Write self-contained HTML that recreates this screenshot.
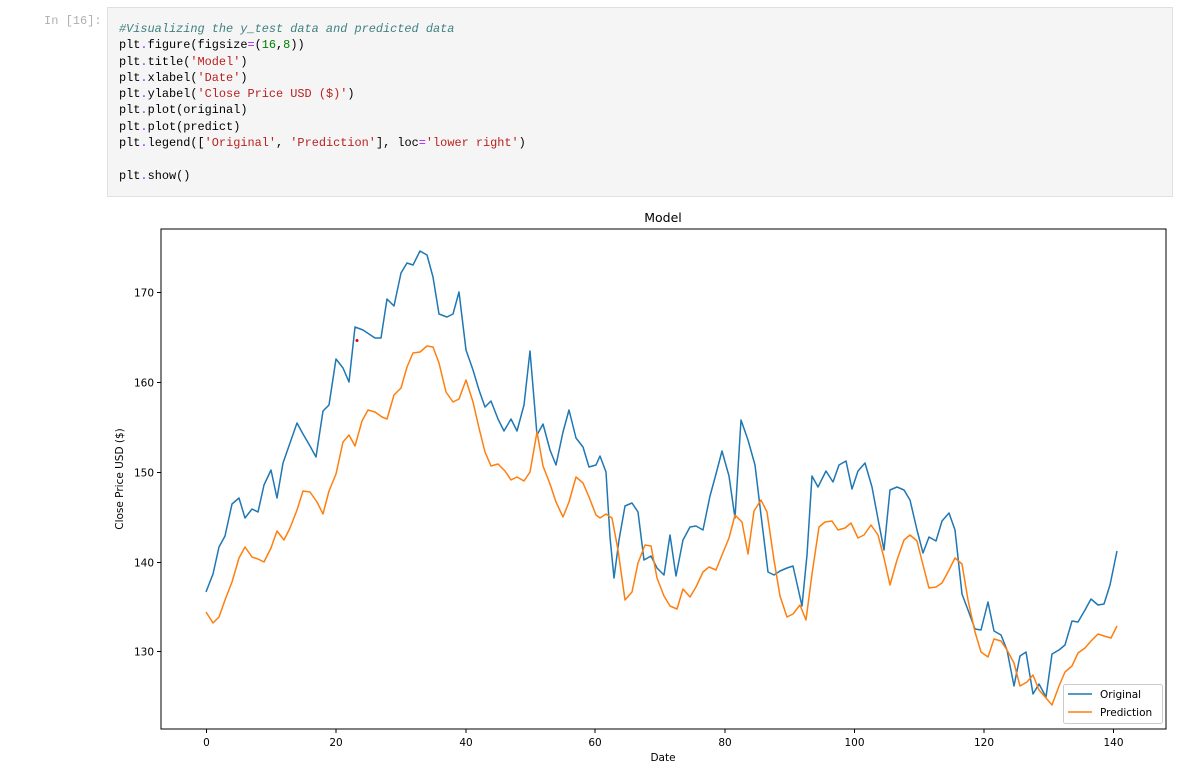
<!DOCTYPE html>
<html><head><meta charset="utf-8"><style>
body{margin:0;background:#fff;width:1199px;height:779px;overflow:hidden;position:relative;font-family:"Liberation Sans",sans-serif}
.prompt{position:absolute;left:44px;top:14px;font:12px "Liberation Mono",monospace;color:#b0b0b0}
.cell{position:absolute;left:107px;top:7px;width:1066px;height:190px;background:#f5f5f5;border:1px solid #e0e0e0;box-sizing:border-box}
pre{position:absolute;left:11px;top:13px;margin:0;font:11.9px/16.3px "Liberation Mono",monospace;color:#000}
.c{color:#408080;font-style:italic}.s{color:#ba2121}.n{color:#008000}.o{color:#aa22ff}
svg{position:absolute;left:0;top:0}
</style></head><body>
<div class="prompt">In [16]:</div>
<div class="cell"><pre><span class="c">#Visualizing the y_test data and predicted data</span>
plt<span class="o">.</span>figure(figsize<span class="o">=</span>(<span class="n">16</span>,<span class="n">8</span>))
plt<span class="o">.</span>title(<span class="s">'Model'</span>)
plt<span class="o">.</span>xlabel(<span class="s">'Date'</span>)
plt<span class="o">.</span>ylabel(<span class="s">'Close Price USD ($)'</span>)
plt<span class="o">.</span>plot(original)
plt<span class="o">.</span>plot(predict)
plt<span class="o">.</span>legend([<span class="s">'Original'</span>, <span class="s">'Prediction'</span>], loc<span class="o">=</span><span class="s">'lower right'</span>)

plt<span class="o">.</span>show()</pre></div>
<svg width="1199" height="779" font-family="DejaVu Sans, sans-serif" font-size="10.5">
<text x="663" y="222" text-anchor="middle" font-size="12.5">Model</text>
<g stroke="#000" stroke-width="1">
<line x1="161" y1="292.5" x2="157" y2="292.5"/><line x1="161" y1="382.5" x2="157" y2="382.5"/><line x1="161" y1="472.5" x2="157" y2="472.5"/><line x1="161" y1="562.5" x2="157" y2="562.5"/><line x1="161" y1="651.5" x2="157" y2="651.5"/>
<line x1="206.5" y1="729" x2="206.5" y2="733"/><line x1="336" y1="729" x2="336" y2="733"/><line x1="466" y1="729" x2="466" y2="733"/><line x1="595" y1="729" x2="595" y2="733"/><line x1="725" y1="729" x2="725" y2="733"/><line x1="854.5" y1="729" x2="854.5" y2="733"/><line x1="984" y1="729" x2="984" y2="733"/><line x1="1113.5" y1="729" x2="1113.5" y2="733"/>
</g>
<g text-anchor="end"><text x="154" y="296.5">170</text><text x="154" y="386.5">160</text><text x="154" y="476.5">150</text><text x="154" y="566.5">140</text><text x="154" y="655.5">130</text></g>
<g text-anchor="middle"><text x="206.5" y="746">0</text><text x="336" y="746">20</text><text x="466" y="746">40</text><text x="595" y="746">60</text><text x="725" y="746">80</text><text x="854.5" y="746">100</text><text x="984" y="746">120</text><text x="1113.5" y="746">140</text>
<text x="663" y="761">Date</text></g>
<text transform="translate(123,479) rotate(-90)" text-anchor="middle">Close Price USD ($)</text>
<polyline fill="none" stroke="#1f77b4" stroke-width="1.5" stroke-linejoin="round" points="206,592 213,574 219,547 225,536 232,504 239,498 245,518 252,509 258,512 264,485 271,470 277,498 283,463 290,443 297,423 303,434 310,446 316,457 323,411 329,405 336,359 343,368 349,382 355,327 363,330 369,334 375,338 381,338 387,299 394,306 401,273 407,263 413,265 420,251 427,255 433,277 439,314 447,317 453,314 459,292 466,350 473,370 479,390 485,407 491,401 498,419 504,431 511,419 517,431 524,405 530,351 537,435 543,424 550,450 556,465 563,432 569,410 576,438 583,447 589,467 596,465 600,456 606,472 610,537 614,578 619,540 625,506 632,503 638,512 644,560 651,556 657,568 664,575 670,535 676,576 683,540 690,527 696,526 703,530 710,496 716,474 722,451 729,476 735,518 741,420 748,440 755,465 761,515 768,572 774,575 780,571 787,568 793,566 802,606 807,555 812,476 818,487 826,471 833,482 839,465 846,461 852,489 858,471 865,463 872,487 878,519 884,550 890,490 897,487 904,490 910,500 917,530 923,553 929,537 936,541 942,521 949,513 955,530 962,594 968,610 975,629 981,630 988,602 994,631 1001,635 1007,650 1014,686 1020,656 1026,652 1033,694 1039,684 1046,697 1052,654 1059,650 1065,645 1072,621 1078,622 1085,610 1091,599 1098,605 1104,604 1110,585 1117,551"/>
<polyline fill="none" stroke="#ff7f0e" stroke-width="1.5" stroke-linejoin="round" points="206,612 213,623 219,617 225,600 232,582 239,558 245,547 252,557 258,559 264,562 271,548 277,531 284,540 290,528 297,510 303,491 310,492 317,502 323,514 329,491 336,474 343,442 349,435 355,446 362,421 368,410 375,412 382,417 387,419 394,395 401,388 407,367 413,353 420,352 427,346 433,347 439,363 446,392 453,402 459,399 466,380 473,402 479,428 485,452 491,466 498,464 505,471 511,480 517,477 524,481 530,472 537,432 543,466 550,484 556,502 563,517 569,502 576,477 583,483 589,497 596,515 600,518 606,514 612,518 618,550 625,600 632,592 638,563 645,545 651,546 657,578 664,596 670,606 677,609 683,589 690,597 696,587 703,572 709,567 716,570 722,555 729,538 735,515 742,522 748,554 754,511 761,500 767,512 774,560 780,596 787,617 793,614 800,605 806,620 812,574 819,527 825,522 832,521 838,530 845,528 851,523 858,538 864,535 871,525 878,535 884,558 890,585 897,560 904,540 910,535 917,541 923,565 929,588 936,587 942,583 949,570 955,558 962,564 968,600 975,632 981,652 988,657 994,639 1001,641 1007,650 1014,663 1020,686 1027,682 1033,675 1039,690 1046,698 1052,705 1059,686 1065,672 1072,666 1078,653 1085,648 1091,641 1098,634 1104,636 1111,638 1117,626"/>
<circle cx="357" cy="340.5" r="1.5" fill="#e00"/>
<rect x="161" y="229" width="1005" height="500" fill="none" stroke="#000" stroke-width="1"/>
<rect x="1063.5" y="684.5" width="99" height="39" rx="2" fill="#fff" fill-opacity="0.8" stroke="#ccc"/>
<line x1="1068" y1="694" x2="1092" y2="694" stroke="#1f77b4" stroke-width="1.5"/>
<line x1="1068" y1="712" x2="1092" y2="712" stroke="#ff7f0e" stroke-width="1.5"/>
<text x="1100" y="698">Original</text><text x="1100" y="716">Prediction</text>
</svg>
</body></html>
